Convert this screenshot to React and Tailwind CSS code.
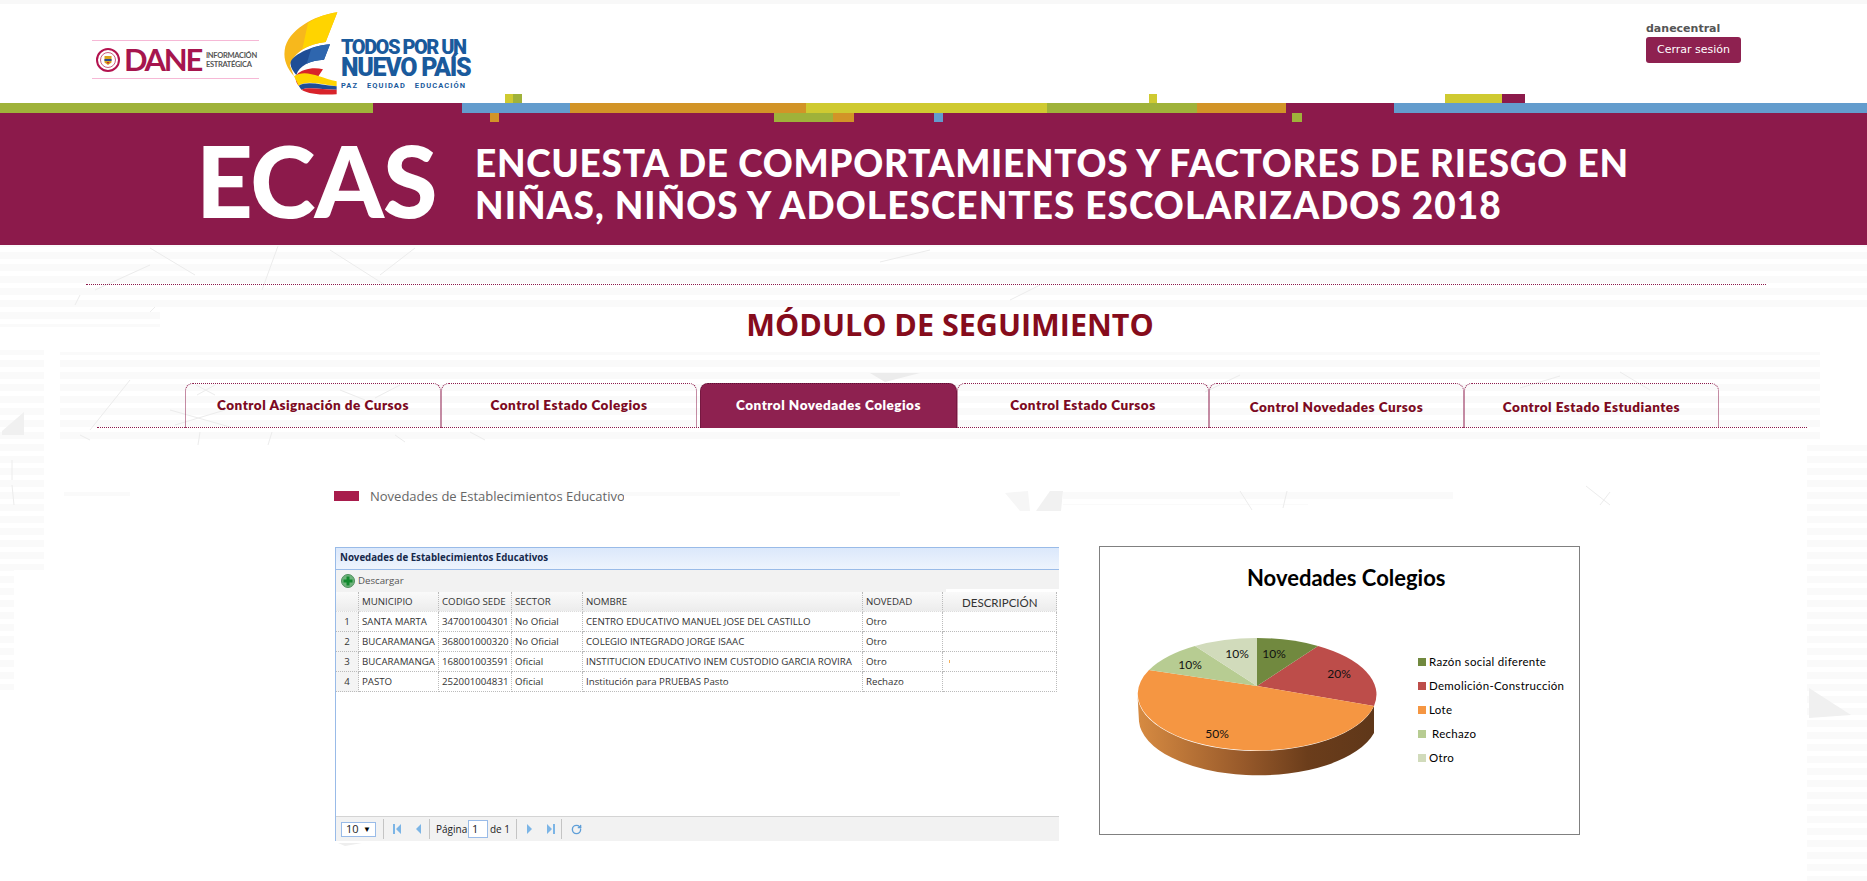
import { RotateCw } from 'lucide-react';

const strip = [
  ['w-[373px]', 'bg-[#9fb23a]'],
  ['w-[89px]', 'bg-[#8c1a4b]'],
  ['w-[108px]', 'bg-[#639ccd]'],
  ['w-[236px]', 'bg-[#d29427]'],
  ['w-[241px]', 'bg-[#cfca31]'],
  ['w-[150px]', 'bg-[#9fb23a]'],
  ['w-[89px]', 'bg-[#d29427]'],
  ['w-[108px]', 'bg-[#8c1a4b]'],
  ['flex-1', 'bg-[#639ccd]'],
];

const bits = [
  'left-[505px] top-[94px] w-[8px] h-[9px] bg-[#cfca31]',
  'left-[513px] top-[94px] w-[9px] h-[9px] bg-[#9fb23a]',
  'left-[490px] top-[113px] w-[9px] h-[9px] bg-[#d29427]',
  'left-[774px] top-[113px] w-[59px] h-[9px] bg-[#9fb23a]',
  'left-[833px] top-[113px] w-[21px] h-[9px] bg-[#d29427]',
  'left-[934px] top-[113px] w-[9px] h-[9px] bg-[#639ccd]',
  'left-[1149px] top-[94px] w-[8px] h-[9px] bg-[#cfca31]',
  'left-[1292px] top-[113px] w-[10px] h-[9px] bg-[#9fb23a]',
  'left-[1445px] top-[94px] w-[57px] h-[9px] bg-[#cfca31]',
  'left-[1502px] top-[94px] w-[23px] h-[9px] bg-[#8c1a4b]',
];

const tabs = [
  { label: 'Control Asignación de Cursos', box: 'w-[256px] pb-[2px]' },
  { label: 'Control Estado Colegios', box: 'w-[256px] pb-[2px]' },
  { label: 'Control Novedades Colegios', box: 'w-[257px] ml-[3px] pb-[2px]', active: true },
  { label: 'Control Estado Cursos', box: 'w-[252px] pb-[2px]' },
  { label: 'Control Novedades Cursos', box: 'w-[255px] pt-[2px]' },
  { label: 'Control Estado Estudiantes', box: 'w-[255px] pt-[2px]' },
];

const rows = [
  ['1', 'SANTA MARTA', '347001004301', 'No Oficial', 'CENTRO EDUCATIVO MANUEL JOSE DEL CASTILLO', 'Otro'],
  ['2', 'BUCARAMANGA', '368001000320', 'No Oficial', 'COLEGIO INTEGRADO JORGE ISAAC', 'Otro'],
  ['3', 'BUCARAMANGA', '168001003591', 'Oficial', 'INSTITUCION EDUCATIVO INEM CUSTODIO GARCIA ROVIRA', 'Otro'],
  ['4', 'PASTO', '252001004831', 'Oficial', 'Institución para PRUEBAS Pasto', 'Rechazo'],
];

const legend = [
  ['bg-[#71893f]', 'Razón social diferente', ''],
  ['bg-[#bd4d4a]', 'Demolición-Construcción', ''],
  ['bg-[#f59642]', 'Lote', ''],
  ['bg-[#b7cc92]', 'Rechazo', 'pl-[3px]'],
  ['bg-[#d1dbbb]', 'Otro', ''],
];

// faint watermark behind the page: striped areas, then thin strokes
const stripeAreas = [
  [0, 245, 1867, 62], [0, 307, 160, 20], [300, 286, 1567, 10],
  [60, 352, 1760, 92], [0, 350, 44, 220], [1807, 445, 60, 436],
  [0, 570, 14, 120], [64, 490, 66, 6], [380, 488, 520, 8],
  [1063, 491, 245, 14], [1305, 491, 148, 12],
];
const marks = [
  [150, 265, 95, 290], [150, 248, 195, 275], [278, 246, 262, 290], [330, 250, 385, 285], [415, 248, 380, 275],
  [80, 295, 75, 305], [155, 307, 150, 312], [880, 262, 930, 250], [1010, 300, 1040, 285], [1240, 375, 1205, 392],
  [130, 380, 90, 430], [196, 385, 215, 395], [215, 385, 197, 395], [340, 390, 365, 400], [400, 385, 375, 398],
  [170, 410, 230, 427], [175, 425, 225, 410], [80, 435, 90, 440], [200, 432, 198, 445], [272, 432, 268, 445],
  [395, 435, 405, 442], [470, 432, 485, 440], [1620, 372, 1650, 390], [1520, 388, 1560, 376],
  [1240, 491, 1252, 510], [1287, 491, 1283, 508], [1586, 486, 1610, 505], [1610, 492, 1600, 505],
  [12, 460, 12, 480], [12, 485, 14, 505],
];

function Texture() {
  return (
    <svg className="absolute left-0 top-0 pointer-events-none" width="1867" height="881" viewBox="0 0 1867 881">
      <defs>
        <pattern id="stripes" width="12" height="12" patternUnits="userSpaceOnUse">
          <rect width="12" height="7" fill="#fafafa" />
        </pattern>
      </defs>
      <rect x="0" y="0" width="1867" height="4" fill="#f8f8f8" />
      {stripeAreas.map(([x, y, w, h], i) => (
        <rect key={i} x={x} y={y} width={w} height={h} fill="url(#stripes)" />
      ))}
      {marks.map(([x1, y1, x2, y2], i) => (
        <line key={i} x1={x1} y1={y1} x2={x2} y2={y2} stroke="#ececec" strokeWidth="1" />
      ))}
      <polygon points="870,373 920,373 885,382" fill="#ececec" />
      <polygon points="1050,491 1063,491 1061,511 1036,511" fill="#f1f1f1" />
      <polygon points="1005,493 1028,491 1030,511 1020,511" fill="#f6f6f6" />
      <polygon points="2,431 24,412 24,435 2,435" fill="#f0f0f0" />
      <polygon points="1809,688 1851,715 1809,718" fill="#f0f0f0" />
      <polygon points="338,843 362,843 345,846" fill="#eeeeee" />
    </svg>
  );
}

function DaneLogo() {
  return (
    <div className="w-[167px] h-[39px] border-y border-[#f6b8d6] flex items-center pl-[4px] font-['Lato',sans-serif]">
      <svg width="24" height="24" viewBox="0 0 24 24" className="shrink-0">
        <circle cx="12" cy="12" r="11" fill="#fff" stroke="#b3134f" strokeWidth="2" />
        <circle cx="12" cy="12" r="7.5" fill="#fff" stroke="#c9607f" strokeWidth="1" />
        <path d="M8.5 8h7v6.5L12 17l-3.500-2.500Z" fill="#d9a21e" />
        <path d="M8.500 11h7v2h-7Z" fill="#274b8f" />
        <path d="M10.500 14h3l-1.500 2Z" fill="#c2252d" />
      </svg>
      <span className="ml-[4px] text-[31px] leading-none text-[#a6154e] tracking-[-2.3px] font-bold">DANE</span>
      <span className="ml-[5px] text-[7.500px] leading-[9px] text-[#555] font-bold tracking-[-0.3px]">
        INFORMACIÓN<br />ESTRATÉGICA
      </span>
    </div>
  );
}

function PaisLogo() {
  return (
    <div className="flex items-start">
      <svg width="56" height="84" viewBox="664 32 168 252" className="shrink-0">
        <path d="M830 36L795 125C745 130 700 155 688 195L700 228C680 205 668 180 672 150C680 90 760 45 830 36Z" fill="#f7b81c" />
        <path d="M830 36L795 125C770 128 745 135 725 147L742 68C770 50 800 40 830 36Z" fill="#ffd400" />
        <path d="M808 132L790 178C750 180 715 195 707 224C695 210 688 197 690 185C700 160 760 135 808 132Z" fill="#1f4e96" />
        <path d="M808 132L790 178C770 179 752 183 738 190L752 144C770 137 790 133 808 132Z" fill="#2e66ae" />
        <path d="M707 224C725 205 760 200 787 207L770 232C745 232 725 240 714 256C706 246 703 238 707 224Z" fill="#d8232a" />
        <path d="M700 228C735 205 775 232 828 243V258C780 252 740 238 714 256Z" fill="#ffd400" />
        <path d="M714 256C740 240 780 254 828 258V268C785 268 745 258 722 268Z" fill="#1f4e96" />
        <path d="M722 268C745 258 785 268 828 268V282C785 284 745 282 722 268Z" fill="#d8232a" />
      </svg>
      <div className="ml-[3px] mt-[27px] w-[127px] font-['Roboto',sans-serif] text-[#1a5a9c]">
        <div className="text-[20px] leading-[19px] font-black tracking-[-1.5px] whitespace-nowrap">TODOS POR UN</div>
        <div className="text-[25px] leading-[21px] font-black tracking-[-1.3px] whitespace-nowrap">NUEVO PAÍS</div>
        <div className="text-[7.500px] leading-[10px] mt-[3px] font-bold tracking-[1.1px] whitespace-pre">PAZ   EQUIDAD   EDUCACIÓN</div>
      </div>
    </div>
  );
}

function Header() {
  return (
    <div className="h-[103px] flex items-start">
      <div className="ml-[92px] mt-[40px]"><DaneLogo /></div>
      <div className="ml-[23px] mt-[11px]"><PaisLogo /></div>
      <div className="ml-auto mr-[126px] mt-[21px] font-['DejaVu_Sans',sans-serif]">
        <div className="text-[11px] leading-[15px] font-bold text-[#555]">danecentral</div>
        <button className="w-[95px] h-[26px] rounded-[3px] bg-[#8e2150] text-white text-[11px] text-center">Cerrar sesión</button>
      </div>
    </div>
  );
}

function Banner() {
  return (
    <div className="h-[142px] bg-[#8c1a4b] flex flex-col">
      <div className="h-[10px] flex">
        {strip.map(([w, c], i) => <div key={i} className={`${w} ${c}`} />)}
      </div>
      <div className="flex-1 flex items-center pl-[196px] text-white font-['Lato',sans-serif] whitespace-nowrap">
        <span className="w-[279px] text-[99px] leading-none font-black tracking-[-1px]">ECAS</span>
        <div className="mt-[9px] font-black text-[37px] leading-[42px] tracking-[0.7px]">
          ENCUESTA DE COMPORTAMIENTOS Y FACTORES DE RIESGO EN<br />
          <span className="tracking-[1.05px]">NIÑAS, NIÑOS Y ADOLESCENTES ESCOLARIZADOS 2018</span>
        </div>
      </div>
    </div>
  );
}

function Tabs() {
  return (
    <div className="ml-[97px] w-[1710px] h-[45px] mt-[41px] pl-[88px] flex border-b border-dotted border-[#8c1a4b] font-['Lato',sans-serif]">
      {tabs.map((t) => (
        <div
          key={t.label}
          className={`${t.box} h-[45px] flex items-center justify-center rounded-t-[8px] border border-b-0 border-dotted text-[13.500px] font-extrabold tracking-[0.5px] ${
            t.active ? 'bg-[#8e2150] border-[#5e1033] text-white' : 'border-[#8c1a4b] text-[#7d0a23]'
          }`}
        >
          {t.label}
        </div>
      ))}
    </div>
  );
}

function Cell({ children, className = '' }) {
  return (
    <div className={`h-[20px] leading-[19px] px-[3px] border-r border-b border-dotted border-[#bbb] whitespace-nowrap overflow-hidden ${className}`}>
      {children}
    </div>
  );
}

function PagerIcon({ d }) {
  return (
    <svg width="9" height="12" viewBox="0 0 9 12" className="shrink-0">
      <path d={d} fill="#7cb5e6" />
    </svg>
  );
}

function Sep() {
  return <div className="w-px h-[20px] bg-[#c4c4c4] shrink-0" />;
}

function Grid() {
  return (
    <div className="relative w-[724px] h-[294px] border-l border-[#99bbe8] flex flex-col font-['Open_Sans',sans-serif] text-[9.700px] text-[#333]">
      <div className="h-[23px] border-y border-[#99bbe8] bg-gradient-to-b from-[#dbe8fb] to-[#eef4fd] flex items-center pl-[4px] font-bold text-[#15284b]">
        Novedades de Establecimientos Educativos
      </div>
      <div className="h-[22px] bg-[#f2f2f2] flex items-center pl-[5px] gap-[3px] text-[#555]">
        <svg width="14" height="14" viewBox="0 0 14 14" className="shrink-0">
          <circle cx="7" cy="7" r="6.500" fill="#6fb37c" stroke="#4d8f5c" />
          <path d="M5.500 2.500h3v3h3v3h-3v3h-3v-3h-3v-3h3Z" fill="#128a2e" />
        </svg>
        <span>Descargar</span>
      </div>
      <div className="grid grid-cols-[23px_80px_73px_71px_280px_80px_114px] bg-white">
        {['', 'MUNICIPIO', 'CODIGO SEDE', 'SECTOR', 'NOMBRE', 'NOVEDAD'].map((h, i) => (
          <Cell key={i} className="bg-gradient-to-b from-[#fafafa] to-[#ececec] border-b-[#ddd] border-b-solid">{h}</Cell>
        ))}
        <Cell className="bg-gradient-to-b from-[#fafafa] to-[#ececec] border-b-[#ddd] border-b-solid pl-[19px] text-[11.500px] font-['Lato',sans-serif] leading-[21px]">DESCRIPCIÓN</Cell>
        {rows.map((r) => (
          <div key={r[0]} className="contents">
            {r.map((c, i) => (
              <Cell key={i} className={i === 0 ? 'bg-[#f4f4f4] text-center' : ''}>{c}</Cell>
            ))}
            <Cell className="relative">
              {r[0] === '3' && <span className="absolute left-[6px] top-[8px] w-px h-[3px] bg-[#f7b15a]" />}
            </Cell>
          </div>
        ))}
      </div>
      <div className="absolute right-0 top-[42px] w-[113px] h-[3px] bg-white" />
      <div className="mt-auto h-[25px] bg-[#f2f2f2] border-t border-[#d4d4d4] flex items-center pl-[5px] text-[#222] text-[10px]">
        <div className="w-[35px] h-[15px] border border-[#99bbe8] bg-white flex items-center justify-between px-[4px] text-[11px]">
          <span>10</span>
          <span className="text-[8px] text-black">▼</span>
        </div>
        <div className="w-[7px]" />
        <Sep />
        <div className="w-[9px]" />
        <PagerIcon d="M0 1h2v10H0ZM8 1v10L3 6Z" />
        <div className="w-[12px]" />
        <PagerIcon d="M7 1v10L2 6Z" />
        <div className="w-[6px]" />
        <Sep />
        <span className="ml-[6px] w-[32px]">Página</span>
        <div className="w-[20px] h-[18px] border border-[#99bbe8] bg-white pl-[3px] text-[11px] leading-[16px]">1</div>
        <span className="ml-[2px] w-[26px]">de 1</span>
        <Sep />
        <div className="w-[8px]" />
        <PagerIcon d="M2 1v10L7 6Z" />
        <div className="w-[12px]" />
        <PagerIcon d="M1 1v10L6 6ZM7 1h2v10H7Z" />
        <div className="w-[6px]" />
        <Sep />
        <RotateCw className="ml-[9px] text-[#5f9fd8]" size={11} strokeWidth={3} />
      </div>
    </div>
  );
}

function Pie() {
  // coordinates relative to the chart box corner, ellipse centred at 157,148.5
  const ax = 157;
  const ay = 140;
  return (
    <svg width="290" height="150" viewBox="0 80 290 150" className="shrink-0">
      <defs>
        <linearGradient id="side" x1="0" x2="1" y1="0" y2="0">
          <stop offset="0" stopColor="#d78b42" />
          <stop offset="0.45" stopColor="#97592a" />
          <stop offset="0.72" stopColor="#6b3d1b" />
          <stop offset="1" stopColor="#5f3719" />
        </linearGradient>
      </defs>
      <path d="M37.500 148.500A119.500 56.500 0 0 0 274 160V187A119.500 56.500 0 0 1 39 175.500Z" fill="url(#side)" />
      <path d={`M${ax} ${ay}L218 100A119.500 56.500 0 0 1 274 160Z`} fill="#bd4d4a" />
      <path d={`M${ax} ${ay}L274 160A119.500 56.500 0 1 1 49 124Z`} fill="#f59642" />
      <path d={`M${ax} ${ay}L49 124A119.500 56.500 0 0 1 95 100Z`} fill="#b7cc92" />
      <path d={`M${ax} ${ay}L95 100A119.500 56.500 0 0 1 157 92Z`} fill="#d1dbbb" />
      <path d={`M${ax} ${ay}L157 92A119.500 56.500 0 0 1 218 100Z`} fill="#71893f" />
      <g className="font-['Lato',sans-serif]" fontSize="12" fill="#111" textAnchor="middle">
        <text x="174" y="112">10%</text>
        <text x="239" y="132">20%</text>
        <text x="117" y="192">50%</text>
        <text x="90" y="123">10%</text>
        <text x="137" y="112">10%</text>
      </g>
    </svg>
  );
}

function Chart() {
  return (
    <div className="ml-[40px] w-[481px] h-[289px] -mt-px border border-[#808080] bg-white flex flex-col font-['Lato',sans-serif] text-black">
      <div className="pt-[14px] pl-[147px] text-[22px] leading-[34px] font-bold whitespace-nowrap">Novedades Colegios</div>
      <div className="mt-[31px] flex">
        <Pie />
        <div className="ml-[28px] pt-[28px] flex flex-col gap-[9px] text-[11.500px] leading-[15px] tracking-[0.3px]">
          {legend.map(([c, label, pad]) => (
            <div key={label} className="flex items-center whitespace-nowrap">
              <span className={`w-[8px] h-[8px] mr-[3px] ${c}`} />
              <span className={pad}>{label}</span>
            </div>
          ))}
        </div>
      </div>
    </div>
  );
}

export default function App() {
  return (
    <div className="relative w-[1867px] h-[881px] overflow-hidden bg-white">
      <Texture />
      <div className="relative">
        <Header />
        <Banner />
        {bits.map((b) => <div key={b} className={`absolute ${b}`} />)}
        <div className="ml-[86px] w-[1680px] mt-[39px] border-t border-dotted border-[#8c1a4b]" />
        <h1 className="mt-[21px] pl-[33px] text-center font-['Open_Sans',sans-serif] font-bold text-[30.500px] leading-[36px] text-[#860c1c]">
          MÓDULO DE SEGUIMIENTO
        </h1>
        <Tabs />
        <div className="ml-[334px] mt-[59px] h-[18px] flex items-center">
          <div className="w-[25px] h-[10px] bg-[#a81c4c]" />
          <div className="ml-[11px] w-[254px] overflow-hidden whitespace-nowrap text-[13px] leading-[18px] text-[#666] font-['Open_Sans',sans-serif]">
            Novedades de Establecimientos Educativos
          </div>
        </div>
        <div className="ml-[335px] mt-[42px] flex items-start">
          <Grid />
          <Chart />
        </div>
      </div>
    </div>
  );
}
